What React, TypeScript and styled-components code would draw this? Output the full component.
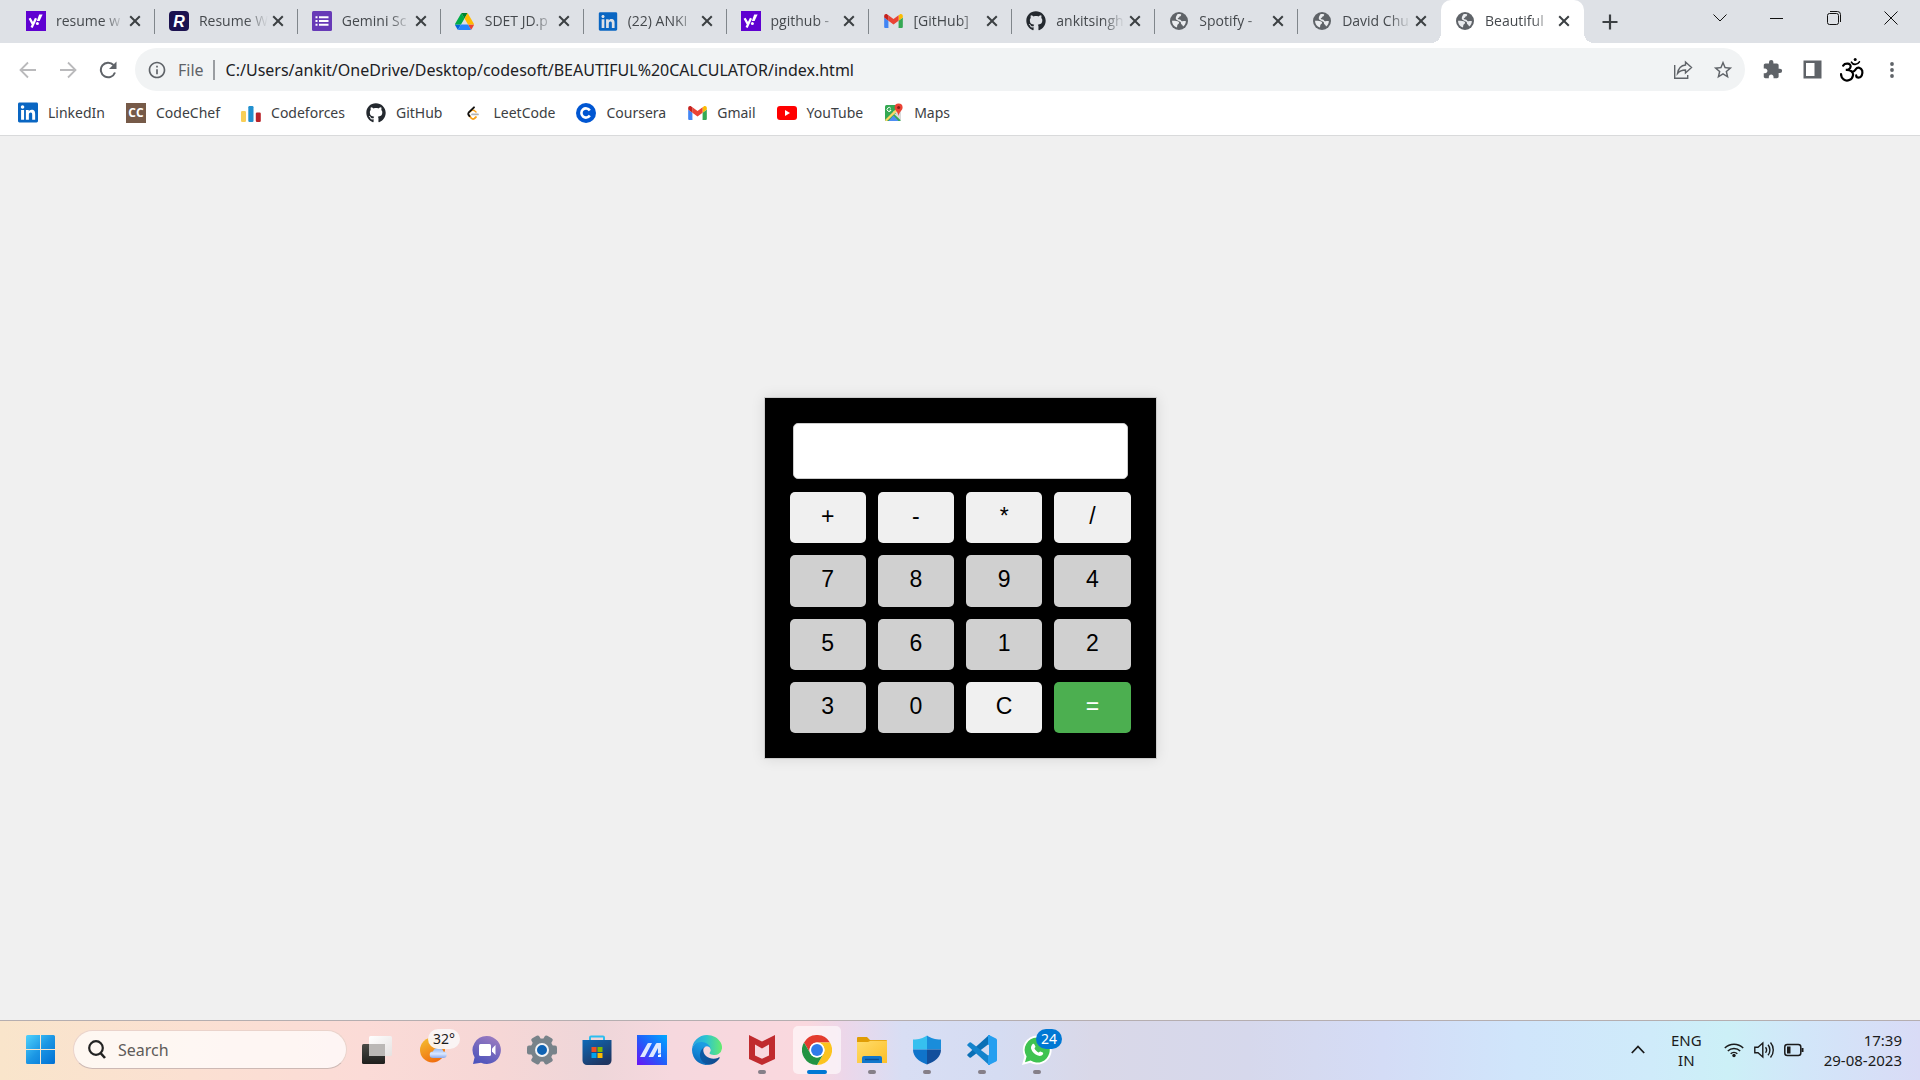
import React, { useState } from "react";
import styled, { createGlobalStyle, css } from "styled-components";
import { FaGithub, FaLinkedin } from "react-icons/fa";
import { MdExtension, MdStarBorder, MdOutlineInfo } from "react-icons/md";

const uiFont = `"Noto Sans", "Open Sans", sans-serif`;

const GlobalStyle = createGlobalStyle`
  *, *::before, *::after { box-sizing: border-box; }
  body { margin: 0; background: #f0f0f0; font-family: ${uiFont}; }
  button, input { font-family: inherit; }
`;

/* ---------- shared ---------- */

const Screen = styled.div`
  display: flex;
  flex-direction: column;
  min-height: 100vh;
`;

const PlainButton = styled.button`
  display: flex;
  align-items: center;
  justify-content: center;
  flex: none;
  padding: 0;
  border: 0;
  background: none;
  color: inherit;
`;

const IconBox = styled.span<{ $size: number }>`
  display: flex;
  align-items: center;
  justify-content: center;
  flex: none;
  width: ${(p) => p.$size}px;
  height: ${(p) => p.$size}px;

  svg { display: block; }
`;

/* ---------- tab strip ---------- */

const TabStrip = styled.header`
  display: flex;
  height: 43px;
  padding: 0 1px 0 12px;
  background: #dee1e6;
  color: #3c4043;
`;

const TabList = styled.nav`
  display: flex;
  flex: 0 1 1572px;
  min-width: 0;
`;

const Tab = styled.div<{ $active?: boolean; $divided?: boolean }>`
  position: relative;
  display: flex;
  align-items: center;
  flex: 1 1 0;
  min-width: 0;
  padding: 0 11px 1px 14px;

  ${(p) =>
    p.$divided &&
    css`
      &::after {
        content: "";
        position: absolute;
        right: 0;
        top: 9px;
        width: 1px;
        height: 25px;
        background: #80868b;
      }
    `}

  ${(p) =>
    p.$active &&
    css`
      background: #fff;
      border-radius: 10px 10px 0 0;

      &::before,
      &::after {
        content: "";
        position: absolute;
        bottom: 0;
        width: 10px;
        height: 10px;
      }
      &::before {
        left: -10px;
        background: radial-gradient(circle at 0 0, transparent 10px, #fff 10px);
      }
      &::after {
        right: -10px;
        background: radial-gradient(circle at 100% 0, transparent 10px, #fff 10px);
      }
    `}
`;

const TabTitle = styled.a`
  flex: 1;
  min-width: 0;
  margin-left: 10px;
  overflow: hidden;
  color: #45494d;
  font-family: "Open Sans", "Noto Sans", sans-serif;
  font-size: 14px;
  line-height: 20px;
  text-decoration: none;
  white-space: nowrap;
  mask-image: linear-gradient(to right, #000 calc(100% - 22px), transparent);
`;

const TabClose = styled(PlainButton)`
  width: 18px;
  height: 20px;
  margin-left: 1px;
`;

const NewTab = styled(PlainButton)`
  width: 52px;
`;

const WindowControls = styled.div`
  display: flex;
  height: 36px;
  margin-left: auto;
  color: #111;
`;

const WindowButton = styled(PlainButton)`
  width: 57px;
`;

/* ---------- toolbar ---------- */

const Toolbar = styled.div`
  display: flex;
  align-items: center;
  padding: 5px 8px 0;
  background: #fff;
  color: #5f6368;
`;

const ToolButton = styled(PlainButton)<{ $muted?: boolean }>`
  width: 40px;
  height: 40px;
  color: ${(p) => (p.$muted ? "#bababc" : "#5f6368")};
`;

const Omnibox = styled.label`
  display: flex;
  align-items: center;
  flex: 1;
  height: 43px;
  margin: 0 7px;
  padding: 0 2px 0 12px;
  border-radius: 22px;
  background: #f1f3f4;
  font-size: 16px;
`;

const Scheme = styled.span`
  margin-left: 11px;
  padding-right: 9px;
  border-right: 2px solid #9a9da1;
  line-height: 20px;
`;

const Address = styled.input`
  flex: 1;
  min-width: 0;
  padding: 0 0 0 11px;
  border: 0;
  outline: 0;
  background: none;
  color: #202124;
  font-size: 16px;
`;

/* ---------- bookmarks ---------- */

const Bookmarks = styled.nav`
  display: flex;
  align-items: center;
  gap: 21px;
  height: 45px;
  padding: 0 18px 1px;
  border-bottom: 1px solid #d9dadb;
  background: #fff;
`;

const Bookmark = styled.a`
  display: flex;
  align-items: center;
  gap: 10px;
  color: #3c4043;
  font-size: 14px;
  line-height: 20px;
  text-decoration: none;
`;

/* ---------- calculator ---------- */

const Page = styled.main`
  display: flex;
  flex: 1;
  align-items: center;
  justify-content: center;
  background: #f0f0f0;
`;

const Calculator = styled.section`
  display: flex;
  flex-direction: column;
  gap: 13px;
  width: 393px;
  padding: 25px;
  border: 1px solid #ccc;
  background: #000;
  box-shadow: 0 0 13px rgba(0, 0, 0, 0.1);
  font-family: "Liberation Sans", Arial, sans-serif;
`;

const Display = styled.input`
  height: 56px;
  margin: 0 3px;
  padding: 0 12px;
  border: 1px solid #ccc;
  border-radius: 5px;
  outline: 0;
  background: #fff;
  font-size: 30px;
  text-align: right;
`;

const Keys = styled.div`
  display: grid;
  grid-template-columns: repeat(4, 1fr);
  grid-template-rows: repeat(4, 1fr);
  gap: 12px;
  height: 241px;
`;

const keyColors = {
  operator: ["#f0f0f0", "#000"],
  digit: ["#d0d0d0", "#000"],
  equals: ["#4caf50", "#fff"],
};

const Key = styled.button<{ $kind: keyof typeof keyColors }>`
  padding: 0 0 2px;
  border: 0;
  border-radius: 5px;
  background: ${(p) => keyColors[p.$kind][0]};
  color: ${(p) => keyColors[p.$kind][1]};
  font-size: 23px;
`;

/* ---------- taskbar ---------- */

const Taskbar = styled.footer`
  display: flex;
  align-items: center;
  height: 60px;
  padding: 0 18px 2px 12px;
  border-top: 1px solid #b5aeb0;
  background: linear-gradient(
    to right,
    #f9e5cb 0%, #fbe0d2 10%, #fbdbd7 19%, #f6d7d6 26%, #eed6d9 31%, #f6d8de 35%,
    #fad8de 42%, #ecd7ea 44%, #d8def4 47%, #d5dcf2 52%, #d9d8e8 57%, #d6d8ec 65%,
    #d4dcf6 72%, #d0e5fb 79%, #cfebfa 86%, #ccf0f7 90%, #d2e6f9 94%, #d9dbf6 100%
  );
  color: #1b1b1b;
`;

const StartButton = styled(PlainButton)`
  width: 57px;
  height: 50px;
`;

const SearchBox = styled.label`
  display: flex;
  align-items: center;
  gap: 12px;
  width: 274px;
  height: 39px;
  margin: 0 4px;
  padding: 0 14px;
  border: 1px solid #ead3cb;
  border-bottom-color: #cdb9b4;
  border-radius: 20px;
  background: rgba(255, 255, 255, 0.72);
`;

const SearchInput = styled.input`
  flex: 1;
  min-width: 0;
  padding: 0;
  border: 0;
  outline: 0;
  background: none;
  font-size: 16px;

  &::placeholder { color: #5f5b59; opacity: 1; }
`;

const AppList = styled.div`
  display: flex;
  gap: 7px;
  margin-left: 2px;
`;

const AppButton = styled(PlainButton)<{ $open?: boolean; $active?: boolean }>`
  position: relative;
  width: 48px;
  height: 48px;
  border-radius: 5px;
  background: ${(p) => (p.$active ? "rgba(255, 255, 255, 0.6)" : "none")};

  ${(p) =>
    (p.$open || p.$active) &&
    css`
      &::after {
        content: "";
        position: absolute;
        bottom: 0;
        width: ${p.$active ? 20 : 8}px;
        height: 4px;
        border-radius: 2px;
        background: ${p.$active ? "#0078d4" : "#857f88"};
      }
    `}
`;

const Badge = styled.span<{ $blue?: boolean }>`
  position: absolute;
  top: 3px;
  left: ${(p) => (p.$blue ? 23 : 20)}px;
  padding: 0 5px;
  border-radius: 10px;
  background: ${(p) => (p.$blue ? "#0078d4" : "rgba(250, 246, 245, 0.95)")};
  color: ${(p) => (p.$blue ? "#fff" : "#1b1b1b")};
  font-size: 14px;
  line-height: 20px;
`;

const Tray = styled.div`
  display: flex;
  align-items: center;
  margin-left: auto;
  font-size: 15px;
  line-height: 20px;
`;

const TrayText = styled.div<{ $right?: boolean }>`
  text-align: ${(p) => (p.$right ? "right" : "center")};
`;

const TrayIcons = styled.div`
  display: flex;
  gap: 10px;
  margin: 0 20px 0 22px;
`;

const TrayChevron = styled(PlainButton)`
  width: 20px;
  height: 40px;
  margin-right: 23px;
`;

/* ---------- drawings ---------- */

const Cross = () => (
  <svg width="12" height="12" viewBox="0 0 12 12" stroke="#3c4043" strokeWidth="2">
    <path d="M1.2 1.2 10.8 10.8M10.8 1.2 1.2 10.8" />
  </svg>
);

const Yahoo = () => (
  <svg width="20" height="20" viewBox="0 0 20 20">
    <path fill="#5f01d1" d="M0 0h20v20H0z" />
    <path d="M3.6 7.2 6.6 12.6M10 7.2 5.6 16.4" stroke="#fff" strokeWidth="2.3" fill="none" />
    <path d="M13.2 3.6h3.4L13.6 10h-2.8z" fill="#fff" />
    <circle cx="11.4" cy="12.4" r="1.5" fill="#fff" />
  </svg>
);

const ResumeLogo = () => (
  <svg width="20" height="20" viewBox="0 0 20 20">
    <rect width="20" height="20" rx="4" fill="#1c1250" />
    <text x="10" y="15.5" textAnchor="middle" fill="#fff" fontFamily="Liberation Sans" fontWeight="700" fontStyle="italic" fontSize="16">R</text>
  </svg>
);

const Forms = () => (
  <svg width="20" height="20" viewBox="0 0 20 20">
    <rect width="20" height="20" rx="1.5" fill="#673ab7" />
    <path d="M7 6.2h9.5M7 10h9.5M7 13.8h9.5M3.5 6.2h2M3.5 10h2M3.5 13.8h2" stroke="#fff" strokeWidth="2" />
  </svg>
);

const Drive = () => (
  <svg width="19" height="17" viewBox="0 0 87.3 78">
    <path d="m6.6 66.85 3.85 6.65c.8 1.4 1.95 2.5 3.3 3.3l13.75-23.8h-27.5c0 1.55.4 3.1 1.2 4.5z" fill="#0066da" />
    <path d="m43.65 25-13.75-23.8c-1.35.8-2.5 1.9-3.3 3.3l-25.4 44a9.06 9.06 0 0 0 -1.2 4.5h27.5z" fill="#00ac47" />
    <path d="m73.55 76.8c1.35-.8 2.5-1.9 3.3-3.3l1.6-2.75 7.65-13.25c.8-1.4 1.2-2.95 1.2-4.5h-27.502l5.852 11.5z" fill="#ea4335" />
    <path d="m43.65 25 13.75-23.8c-1.35-.8-2.9-1.2-4.5-1.2h-18.5c-1.6 0-3.15.45-4.5 1.2z" fill="#00832d" />
    <path d="m59.8 53h-32.3l-13.75 23.8c1.35.8 2.9 1.2 4.5 1.2h50.8c1.6 0 3.15-.45 4.5-1.2z" fill="#2684fc" />
    <path d="m73.4 26.5-12.7-22c-.8-1.4-1.95-2.5-3.3-3.3l-13.75 23.8 16.15 28h27.45c0-1.55-.4-3.1-1.2-4.5z" fill="#ffba00" />
  </svg>
);

const Gmail = () => (
  <svg width="19" height="14" viewBox="52 42 88 66">
    <path fill="#4285f4" d="M58 108h14V74L52 59v43c0 3.32 2.69 6 6 6" />
    <path fill="#34a853" d="M120 108h14c3.32 0 6-2.69 6-6V59l-20 15" />
    <path fill="#fbbc04" d="M120 48v26l20-15v-8c0-7.42-8.47-11.65-14.4-7.2" />
    <path fill="#ea4335" d="M72 74V48l24 18 24-18v26L96 92" />
    <path fill="#c5221f" d="M52 51v8l20 15V48l-5.6-4.2c-5.94-4.45-14.4-.22-14.4 7.2" />
  </svg>
);

const Globe = () => (
  <svg width="18" height="18" viewBox="0 0 18 18">
    <circle cx="9" cy="9" r="9" fill="#5f6368" />
    <path d="M9.300 2.200C8.300 2.900 7.600 3.600 7.600 4.600 7.600 5.500 8.600 5.400 8.700 6.400 8.800 7.600 7.500 7.500 7.400 8.500 8.600 8.800 10.200 8.600 10.700 9.700 11.200 10.900 12.600 10.300 13.600 10.500 14.600 10.700 15.500 10.300 16 9 16 5.500 13 2.300 9.300 2.200z" fill="#e9ebee" opacity="0" />
    <path d="M2 8.800C3.500 8.600 7.200 8.800 8.600 9.700 9.700 10.500 8.800 11.800 8 12.200 7 12.700 7.400 14 6.900 15.400 3.900 14.500 2 11.900 2 8.800z" fill="#e9ebee" />
    <path d="M7.400 2.300C8.500 1.900 10 1.900 11.200 2.400 11.300 3.700 10.300 4.300 9.400 4.600 9.300 5.600 8.700 6 7.800 6.200 7.600 7.100 8.200 7.300 9.600 7.400 10.900 7.600 11 8.900 12 9.200 13.300 9.500 14.200 8.700 15.900 9.300 15.800 11.400 14.800 13.200 13.100 14.500 12.600 13.300 12.200 12.600 11.300 12.300 10.600 11.500 11.400 10.300 10.300 9.800 8.800 9.200 6.700 8.200 6 7.300 5.300 6.200 6.400 3.600 7.400 2.300z" fill="#e9ebee" />
  </svg>
);

const CodeChef = () => (
  <svg width="20" height="20" viewBox="0 0 20 20">
    <rect width="20" height="20" fill="#765a48" />
    <text x="10" y="14" textAnchor="middle" fill="#fff" fontFamily="Open Sans" fontWeight="700" fontSize="12">CC</text>
  </svg>
);

const Codeforces = () => (
  <svg width="20" height="20" viewBox="0 0 20 20">
    <rect x="0" y="8" width="5" height="11" rx="1.2" fill="#f9cf58" />
    <rect x="7.3" y="3" width="5.2" height="16" rx="1.2" fill="#2190cf" />
    <rect x="14.8" y="9.5" width="5" height="9.5" rx="1.2" fill="#b92329" />
  </svg>
);

const LeetCode = () => (
  <svg width="20" height="20" viewBox="0 0 20 20" fill="none" strokeLinecap="round">
    <path d="M6 12.500 8.300 15.200Q9.800 16.700 11.400 15.500L13 14" stroke="#f9a119" strokeWidth="1.800" />
    <path d="M6.500 9.200 8.300 7.600Q9.800 6.600 11.200 7.500L13 9" stroke="#f9a119" strokeWidth="1.500" />
    <path d="M11 4.300 5.600 9.700Q4.800 10.800 5.600 12L6.500 13" stroke="#111" strokeWidth="1.900" />
    <path d="M9 11.400h6" stroke="#b3b3b3" strokeWidth="1.700" />
  </svg>
);

const Coursera = () => (
  <svg width="20" height="20" viewBox="0 0 20 20">
    <circle cx="10" cy="10" r="10" fill="#0056d2" />
    <path d="M13.8 7.4A4.6 4.6 0 1 0 13.8 12.6" fill="none" stroke="#fff" strokeWidth="2.6" />
  </svg>
);

const YouTube = () => (
  <svg width="20" height="14" viewBox="0 0 20 14">
    <rect width="20" height="14" rx="3" fill="#f00" />
    <path d="M8 4v6l5-3z" fill="#fff" />
  </svg>
);

const Maps = () => (
  <svg width="20" height="20" viewBox="0 0 20 20">
    <rect x="1" y="2" width="16" height="16" rx="1.5" fill="#34a853" />
    <path d="M9 8 17 15.500V8z" fill="#dadada" />
    <path d="M1 17 15.500 2.500l1.500 2L3 18H2z" fill="#fdd663" />
    <path d="M4.500 18 9.500 12.500 14.500 18z" fill="#4e8df5" />
    <path d="M9.500 10.500 17 17.500V12z" fill="#dadada" />
    <path d="M6.800 5.400A2 2 0 1 0 7 7.200H5.500" stroke="#fff" strokeWidth="1" fill="none" />
    <path d="M14.600 0.500a4 4 0 0 1 4 4c0 3-3.300 4-4 8.500-.7-4.500-4-5.500-4-8.500a4 4 0 0 1 4-4z" fill="#ea4335" />
    <circle cx="14.600" cy="4.600" r="1.500" fill="#8c1d18" />
  </svg>
);

const Om = () => (
  <svg width="24" height="25" viewBox="1 0 24 25" fill="none" stroke="#000" strokeLinecap="round">
    <path d="M4.200 8.600C6 5.800 12 6 11.600 9.600 11.300 12 9 12.900 6.800 12.900 11 12.600 14.600 14.400 14 18.400 13.300 23 8 25 4.600 22.400 3 21.200 2.100 19.400 2 17" strokeWidth="2.200" />
    <path d="M12.800 14.600C14.600 15.400 15.600 13.800 16.800 12.200 18.600 9.800 22.200 10.400 23.200 13.600 24 17.200 22.400 20.600 19.600 20.600 18 20.600 17.200 19.600 17.200 18.400" strokeWidth="2.200" />
    <path d="M12.400 5.200C13.800 8.200 18.400 8.200 20.400 4.800" strokeWidth="1.600" />
    <circle cx="16.200" cy="2.600" r="1.500" fill="#000" stroke="none" />
  </svg>
);

const StartLogo = () => (
  <svg width="29" height="29" viewBox="0 0 29 29">
    <defs>
      <linearGradient id="start" x1="0" y1="0" x2="1" y2="1">
        <stop offset="0" stopColor="#4fd2fc" /><stop offset="0.500" stopColor="#1b96e4" /><stop offset="1" stopColor="#0070d4" />
      </linearGradient>
    </defs>
    <path d="M1.500 0H14v14H0V1.500A1.500 1.500 0 0 1 1.500 0zM15 0h12.500A1.500 1.500 0 0 1 29 1.500V14H15zM0 15h14v14H1.500A1.500 1.500 0 0 1 0 27.500zM15 15h14v12.500a1.500 1.500 0 0 1-1.500 1.500H15z" fill="url(#start)" />
  </svg>
);

const TaskView = () => (
  <svg width="30" height="30" viewBox="0 0 30 30">
    <defs>
      <linearGradient id="tvd" x1="0" y1="0" x2="0" y2="1"><stop offset="0" stopColor="#4a4a46" /><stop offset="1" stopColor="#1f1f1d" /></linearGradient>
      <linearGradient id="tvl" x1="0" y1="0" x2="1" y2="1"><stop offset="0" stopColor="#fff" /><stop offset="1" stopColor="#e6e2e1" /></linearGradient>
    </defs>
    <rect x="0" y="9" width="23" height="20" rx="1.500" fill="url(#tvd)" />
    <rect x="7" y="1" width="23" height="20" rx="1.500" fill="url(#tvl)" />
    <rect x="7" y="9" width="16" height="12" fill="#bbb8b6" />
  </svg>
);

const Weather = () => (
  <svg width="30" height="30" viewBox="0 0 30 30">
    <defs>
      <linearGradient id="sun" x1="0.200" y1="0" x2="0.700" y2="1"><stop offset="0" stopColor="#f4bc2f" /><stop offset="1" stopColor="#f0690c" /></linearGradient>
      <linearGradient id="cloud" x1="0" y1="0" x2="0" y2="1"><stop offset="0" stopColor="#86b0f2" /><stop offset="0.600" stopColor="#dbe8ff" /><stop offset="1" stopColor="#8aa9ea" /></linearGradient>
    </defs>
    <circle cx="15.500" cy="15" r="12.500" fill="url(#sun)" />
    <path d="M16 23a3.300 3.300 0 0 1 0-6.600 5.500 5.500 0 0 1 10.400 0 3.300 3.300 0 0 1 0 6.600z" fill="url(#cloud)" />
  </svg>
);

const Chat = () => (
  <svg width="30" height="30" viewBox="0 0 30 30">
    <defs><linearGradient id="chat" x1="0.700" y1="0" x2="0.200" y2="1"><stop offset="0" stopColor="#9a7bc0" /><stop offset="1" stopColor="#4b53bc" /></linearGradient></defs>
    <path d="M15 1a14 14 0 1 1-6 26.700L1 29l1.600-6.800A14 14 0 0 1 15 1z" fill="url(#chat)" />
    <rect x="7" y="9" width="12" height="12" rx="1.500" fill="#fff" />
    <path d="M20 13.500 23.500 10v10L20 16.500z" fill="#fff" />
  </svg>
);

const Gear = () => (
  <svg width="30" height="30" viewBox="0 0 30 30">
    <g fill="#78838a">
      {[0, 60, 120].map((a) => (
        <rect key={a} x="0" y="10.500" width="30" height="9" rx="2" transform={`rotate(${a} 15 15)`} />
      ))}
      <circle cx="15" cy="15" r="11.500" />
    </g>
    <circle cx="15" cy="15" r="6" fill="#0f63b3" stroke="#f3f4f6" strokeWidth="2" />
  </svg>
);

const Store = () => (
  <svg width="30" height="30" viewBox="0 0 30 30">
    <defs><linearGradient id="store" x1="0" y1="0" x2="0.600" y2="1"><stop offset="0" stopColor="#0e6ab8" /><stop offset="1" stopColor="#1f3662" /></linearGradient></defs>
    <path d="M8 6V2.500Q8 1.500 9 1.500H21Q22 1.500 22 2.500V6" fill="none" stroke="#2cbef0" strokeWidth="2" />
    <path d="M.5 5h29v20.500a4.500 4.500 0 0 1-4.500 4.500H5A4.500 4.500 0 0 1 .5 25.500z" fill="url(#store)" />
    <path d="M9.500 12h5v5h-5z" fill="#f25022" /><path d="M15.500 12h5v5h-5z" fill="#7fba00" />
    <path d="M9.500 18h5v5h-5z" fill="#00a4ef" /><path d="M15.500 18h5v5h-5z" fill="#ffb900" />
  </svg>
);

const Armoury = () => (
  <svg width="30" height="30" viewBox="0 0 30 30">
    <defs><linearGradient id="arm" x1="0" y1="1" x2="1" y2="0"><stop offset="0" stopColor="#6a12f5" /><stop offset="0.500" stopColor="#2060fa" /><stop offset="1" stopColor="#00aaff" /></linearGradient></defs>
    <path d="M0 0h30v30H0z" fill="url(#arm)" />
    <path d="M3 22 10.500 8.500Q11 8 11.500 8H15L8 21.500Q7.700 22 7 22zM11.500 22 19 8.500Q19.300 8 20 8H24V18.500H21V13L16.500 21.500Q16.200 22 15.500 22z" fill="#dfe9ff" />
    <path d="M21 20l3-1v3h-3z" fill="#fff" />
  </svg>
);

const Edge = () => (
  <svg width="30" height="30" viewBox="0 0 256 256">
    <defs>
      <linearGradient id="edgeA" x1="0.200" y1="0.500" x2="1" y2="0.600"><stop offset="0" stopColor="#0c59a4" /><stop offset="1" stopColor="#114a8b" /></linearGradient>
      <linearGradient id="edgeB" x1="0.600" y1="0.200" x2="0.300" y2="1"><stop offset="0" stopColor="#1b9de2" /><stop offset="0.500" stopColor="#1383d4" /><stop offset="1" stopColor="#0a62b0" /></linearGradient>
      <linearGradient id="edgeC" x1="0" y1="0.500" x2="1" y2="0.500"><stop offset="0" stopColor="#2d9fe0" /><stop offset="0.450" stopColor="#2bc3d2" /><stop offset="1" stopColor="#66eb6e" /></linearGradient>
    </defs>
    <path d="M231 190.500c-3.400 1.800-6.900 3.400-10.500 4.700a101.900 101.900 0 0 1-35.900 6.500c-47.300 0-88.500-32.500-88.500-74.300a31.500 31.500 0 0 1 16.400-27.300c-42.800 1.800-53.800 46.400-53.800 72.500 0 74 68.100 81.400 82.800 81.400 7.900 0 19.800-2.300 27-4.600l1.300-.4a128.300 128.300 0 0 0 66.600-52.800 4 4 0 0 0-5.400-5.700z" fill="url(#edgeA)" />
    <path d="M105.700 241.500A79.200 79.200 0 0 1 83 220.200a80.700 80.700 0 0 1 29.500-120c3.200-1.500 8.500-4.100 15.600-4a32.400 32.400 0 0 1 25.700 13 31.900 31.900 0 0 1 6.300 18.700c0-.2 24.500-79.600-80-79.600-43.900 0-80 41.700-80 78.200a130.200 130.200 0 0 0 12.100 56 128 128 0 0 0 156.400 67.100 75.600 75.600 0 0 1-62.900-8z" fill="url(#edgeB)" />
    <path d="M152.300 148.900c-.9 1-3.400 2.500-3.400 5.600 0 2.600 1.700 5.200 4.800 7.300 14.400 10.100 41.700 8.700 41.700 8.700 10.700 0 21.300-2.900 30.500-8.400a61.800 61.800 0 0 0 30.400-53.200c.3-22.400-8-37.300-11.300-43.900C223.600 23.800 177.700 0 127.800 0A128 128 0 0 0 0 126.200c.5-36.500 36.800-66 80-66 3.500 0 23.500.3 42 10.100 16.300 8.600 24.900 18.900 30.800 29.200 6.200 10.700 7.300 24.100 7.300 29.500 0 5.300-2.700 13.300-7.800 19.900z" fill="url(#edgeC)" />
  </svg>
);

const McAfee = () => (
  <svg width="28" height="30" viewBox="0 0 28 30">
    <path d="M1 0 14 6.500 27 0V24L14 30 1 24z" fill="#c02b2e" />
    <path d="M7 9.500 14 13.500 21 9.500V20.500L14 23.800 7 20.500z" fill="#f8d8de" />
  </svg>
);

const Chrome = () => (
  <svg width="30" height="30" viewBox="0 0 48 48">
    <circle cx="24" cy="24" r="24" fill="#fff" />
    <path d="M3.200 12A24 24 0 0 1 44.800 12H24A12 12 0 0 0 13.600 30z" fill="#e33b2e" />
    <path d="M44.800 12A24 24 0 0 1 24 48L34.400 30A12 12 0 0 0 24 12z" fill="#fcc31e" />
    <path d="M24 48A24 24 0 0 1 3.200 12L13.600 30A12 12 0 0 0 34.400 30z" fill="#229342" />
    <circle cx="24" cy="24" r="12" fill="#fff" />
    <circle cx="24" cy="24" r="9.500" fill="#2f7bea" />
  </svg>
);

const Folder = () => (
  <svg width="30" height="28" viewBox="0 0 30 28">
    <defs><linearGradient id="fold" x1="0" y1="0" x2="1" y2="1"><stop offset="0" stopColor="#ffdc6b" /><stop offset="1" stopColor="#fcbf28" /></linearGradient></defs>
    <path d="M0 2Q0 1 1 1H10L13 4H29Q30 4 30 5V12H0z" fill="#e09d05" />
    <path d="M0 6H11L13.500 4.800H30V27H0z" fill="url(#fold)" />
    <path d="M5 27V22Q5 20 7 20H23Q25 20 25 22V27z" fill="#1276cb" />
    <path d="M8 23.500h14" stroke="#0a4f94" strokeWidth="1.400" />
  </svg>
);

const Shield = () => (
  <svg width="28" height="30" viewBox="0 0 28 30">
    <path d="M14 .5C10 3.500 6 4.300 0 4.500V14.500H14z" fill="#36c0ef" />
    <path d="M14 .5C18 3.500 22 4.300 28 4.500V14.500H14z" fill="#1a8ddb" />
    <path d="M0 14.500C0 22 6 26.500 14 29.500V14.500z" fill="#0f74cb" />
    <path d="M28 14.500C28 22 22 26.500 14 29.500V14.500z" fill="#124f9c" />
  </svg>
);

const Code = () => (
  <svg width="30" height="30" viewBox="0 0 30 30">
    <path d="M22 0 29 3.500Q30 4 30 5V25Q30 26 29 26.500L22 30z" fill="#259ff0" />
    <path d="M22 0 .6 19.200Q-.2 20 .6 20.800L2.500 22.500Q3.200 23 4 22.500L23 8z" fill="#0a6fb5" />
    <path d="M22 30 .6 10.800Q-.2 10 .6 9.200L2.500 7.500Q3.200 7 4 7.500L23 22z" fill="#1383cc" />
    <path d="M21 0h2v9l-2 1zM21 20l2 1v9h-2z" fill="#259ff0" />
  </svg>
);

const WhatsApp = () => (
  <svg width="32" height="32" viewBox="0 0 32 32">
    <path d="M16 1.500a14.500 14.500 0 1 1-6.700 27.300L1 31l2.400-8.500A14.500 14.500 0 0 1 16 1.500z" fill="#fff" />
    <path d="M16 3.500a12.500 12.500 0 1 1-6.400 23.100L4 28.200l1.600-5.600A12.500 12.500 0 0 1 16 3.500z" fill="#3fc351" />
    <path d="M11.500 10.200c.7-.7 1.500-.6 1.900.2l1 2.200c.3.700-.9 1.600-.9 2 .9 1.800 2.200 3 4 3.900.5.100 1.300-1.300 1.900-1l2.300 1.100c.6.300.6 1 .2 1.700-1 1.700-3 2-4.900 1.300-3.400-1.200-5.700-3.500-6.800-6.600-.6-1.800.2-3.700 1.300-4.800z" fill="#fff" />
  </svg>
);

const LinkedIn = ({ size = 23 }: { size?: number }) => <FaLinkedin size={size} color="#0a66c2" />;
const GitHub = () => <FaGithub size={20} color="#24292f" />;

/* ---------- data ---------- */

const tabs = [
  { title: "resume w", icon: <Yahoo /> },
  { title: "Resume W", icon: <ResumeLogo /> },
  { title: "Gemini Sc", icon: <Forms /> },
  { title: "SDET JD.p", icon: <Drive /> },
  { title: "(22) ANKI", icon: <LinkedIn size={21} /> },
  { title: "pgithub -", icon: <Yahoo /> },
  { title: "[GitHub]", icon: <Gmail /> },
  { title: "ankitsingh", icon: <GitHub /> },
  { title: "Spotify -", icon: <Globe /> },
  { title: "David Chu", icon: <Globe /> },
  { title: "Beautiful", icon: <Globe /> },
];

const bookmarks = [
  { name: "LinkedIn", icon: <LinkedIn /> },
  { name: "CodeChef", icon: <CodeChef /> },
  { name: "Codeforces", icon: <Codeforces /> },
  { name: "GitHub", icon: <GitHub /> },
  { name: "LeetCode", icon: <LeetCode /> },
  { name: "Coursera", icon: <Coursera /> },
  { name: "Gmail", icon: <Gmail /> },
  { name: "YouTube", icon: <YouTube /> },
  { name: "Maps", icon: <Maps /> },
];

const keys = ["+", "-", "*", "/", "7", "8", "9", "4", "5", "6", "1", "2", "3", "0", "C", "="];

const kindOf = (k: string): keyof typeof keyColors =>
  k === "=" ? "equals" : /\d/.test(k) ? "digit" : "operator";

const apps = [
  { name: "Task view", icon: <TaskView /> },
  { name: "Weather", icon: <Weather />, badge: "32°" },
  { name: "Chat", icon: <Chat /> },
  { name: "Settings", icon: <Gear /> },
  { name: "Store", icon: <Store /> },
  { name: "MyASUS", icon: <Armoury /> },
  { name: "Edge", icon: <Edge /> },
  { name: "McAfee", icon: <McAfee />, open: true },
  { name: "Chrome", icon: <Chrome />, active: true },
  { name: "File Explorer", icon: <Folder />, open: true },
  { name: "Security", icon: <Shield />, open: true },
  { name: "Code", icon: <Code />, open: true },
  { name: "WhatsApp", icon: <WhatsApp />, open: true, badge: "24", blue: true },
];

/* ---------- calculator logic ---------- */

function evaluate(expr: string): string {
  const parts = expr.match(/\d+(\.\d+)?|[+\-*/]/g);
  if (!parts) return "";
  const terms: number[] = [];
  let op = "+";
  for (const p of parts) {
    if (/^[+\-*/]$/.test(p)) {
      op = p;
      continue;
    }
    const n = Number(p);
    if (op === "*") terms.push((terms.pop() ?? 0) * n);
    else if (op === "/") terms.push((terms.pop() ?? 0) / n);
    else terms.push(op === "-" ? -n : n);
  }
  return String(terms.reduce((a, b) => a + b, 0));
}

export default function App() {
  const [value, setValue] = useState("");
  const press = (k: string) =>
    setValue((v) => (k === "C" ? "" : k === "=" ? evaluate(v) : v + k));

  return (
    <Screen>
      <GlobalStyle />
      <TabStrip>
        <TabList aria-label="Tabs">
          {tabs.map((t, i) => (
            <Tab key={t.title} $active={i === tabs.length - 1} $divided={i < tabs.length - 2}>
              <IconBox $size={20}>{t.icon}</IconBox>
              <TabTitle href="#">{t.title}</TabTitle>
              <TabClose aria-label={`Close ${t.title}`}><Cross /></TabClose>
            </Tab>
          ))}
        </TabList>
        <NewTab aria-label="New tab">
          <svg width="16" height="16" viewBox="0 0 16 16" stroke="#3c4043" strokeWidth="2.200"><path d="M8 .5v15M.5 8h15" /></svg>
        </NewTab>
        <WindowControls>
          <WindowButton aria-label="Search tabs">
            <svg width="14" height="8" viewBox="0 0 14 8" fill="none" stroke="currentColor"><path d="M.5 .5 7 7 13.500 .5" /></svg>
          </WindowButton>
          <WindowButton aria-label="Minimize">
            <svg width="13" height="13" viewBox="0 0 13 13" stroke="currentColor"><path d="M0 6.500h13" /></svg>
          </WindowButton>
          <WindowButton aria-label="Restore">
            <svg width="14" height="14" viewBox="0 0 14 14" fill="none" stroke="currentColor">
              <rect x=".5" y="2.500" width="11" height="11" rx="2" />
              <path d="M3 .5h7.500a3 3 0 0 1 3 3V11" />
            </svg>
          </WindowButton>
          <WindowButton aria-label="Close">
            <svg width="14" height="14" viewBox="0 0 14 14" stroke="currentColor"><path d="M.5 .5l13 13M13.500 .5l-13 13" /></svg>
          </WindowButton>
        </WindowControls>
      </TabStrip>

      <Toolbar>
        <ToolButton $muted aria-label="Back">
          <svg width="18" height="18" viewBox="0 0 18 18" fill="none" stroke="currentColor" strokeWidth="1.800"><path d="M17 9H2M9 1.500 1.500 9 9 16.500" /></svg>
        </ToolButton>
        <ToolButton $muted aria-label="Forward">
          <svg width="18" height="18" viewBox="0 0 18 18" fill="none" stroke="currentColor" strokeWidth="1.800"><path d="M1 9h15M9 1.500 16.500 9 9 16.500" /></svg>
        </ToolButton>
        <ToolButton aria-label="Reload">
          <svg width="18" height="18" viewBox="0 0 18 18" fill="none" stroke="currentColor" strokeWidth="2">
            <path d="M16 11.500A7.300 7.300 0 1 1 14.500 4" />
            <path d="M17.500 .5v7.500h-7.500z" fill="currentColor" stroke="none" />
          </svg>
        </ToolButton>
        <Omnibox>
          <MdOutlineInfo size={20} />
          <Scheme>File</Scheme>
          <Address
            aria-label="Address"
            defaultValue="C:/Users/ankit/OneDrive/Desktop/codesoft/BEAUTIFUL%20CALCULATOR/index.html"
          />
          <ToolButton as="span">
            <svg width="20" height="20" viewBox="0 0 20 20" fill="none" stroke="currentColor" strokeWidth="1.400">
              <path d="M1.700 5v13.300h13V15" />
              <path d="M12.500 2 18.500 7.500 12.500 13V10C9 10 6.500 11 4.500 13.500 5.200 9 8 5.500 12.500 5z" />
            </svg>
          </ToolButton>
          <ToolButton as="span"><MdStarBorder size={22} /></ToolButton>
        </Omnibox>
        <ToolButton aria-label="Extensions"><MdExtension size={21} /></ToolButton>
        <ToolButton aria-label="Side panel">
          <svg width="19" height="19" viewBox="0 0 19 19"><path fillRule="evenodd" fill="currentColor" d="M.5 .5h18v18H.5zM3 3v13h8.500V3z" /></svg>
        </ToolButton>
        <ToolButton aria-label="Profile"><Om /></ToolButton>
        <ToolButton aria-label="Menu">
          <svg width="4" height="18" viewBox="0 0 4 18" fill="currentColor"><circle cx="2" cy="3" r="1.900" /><circle cx="2" cy="9" r="1.900" /><circle cx="2" cy="15" r="1.900" /></svg>
        </ToolButton>
      </Toolbar>

      <Bookmarks aria-label="Bookmarks">
        {bookmarks.map((b) => (
          <Bookmark key={b.name} href="#">
            <IconBox $size={20}>{b.icon}</IconBox>
            {b.name}
          </Bookmark>
        ))}
      </Bookmarks>

      <Page>
        <Calculator>
          <Display aria-label="Result" readOnly value={value} />
          <Keys>
            {keys.map((k) => (
              <Key key={k} $kind={kindOf(k)} onClick={() => press(k)}>{k}</Key>
            ))}
          </Keys>
        </Calculator>
      </Page>

      <Taskbar>
        <StartButton aria-label="Start"><StartLogo /></StartButton>
        <SearchBox>
          <svg width="18" height="19" viewBox="0 0 18 19" fill="none" stroke="#222" strokeWidth="2.200"><circle cx="8" cy="8" r="6.800" /><path d="M12.500 13 17 18" strokeWidth="2.600" /></svg>
          <SearchInput aria-label="Search" placeholder="Search" />
        </SearchBox>
        <AppList>
          {apps.map((a) => (
            <AppButton key={a.name} aria-label={a.name} $open={a.open} $active={a.active}>
              {a.icon}
              {a.badge && <Badge $blue={a.blue}>{a.badge}</Badge>}
            </AppButton>
          ))}
        </AppList>
        <Tray>
          <TrayChevron aria-label="Show hidden icons">
            <svg width="14" height="9" viewBox="0 0 14 9" fill="none" stroke="currentColor" strokeWidth="1.800"><path d="M.8 8 7 1.500 13.200 8" /></svg>
          </TrayChevron>
          <TrayText>ENG<br />IN</TrayText>
          <TrayIcons>
            <svg width="20" height="20" viewBox="0 0 20 20" fill="none" stroke="currentColor" strokeWidth="1.500">
              <path d="M.8 8a13 13 0 0 1 18.400 0M3.800 11a8.800 8.800 0 0 1 12.400 0M6.700 13.800a4.700 4.700 0 0 1 6.600 0" />
              <circle cx="10" cy="15.500" r="1.700" fill="currentColor" stroke="none" />
            </svg>
            <svg width="20" height="20" viewBox="0 0 20 20" fill="none" stroke="currentColor" strokeWidth="1.400">
              <path d="M.8 7.200H4L8.800 3V17L4 12.800H.8z" />
              <path d="M11.500 7.200a4.500 4.500 0 0 1 0 5.600M14 4.800a8 8 0 0 1 0 10.400M16.500 2.500a11.500 11.500 0 0 1 0 15" />
            </svg>
            <svg width="20" height="20" viewBox="0 0 20 20" fill="none" stroke="currentColor" strokeWidth="1.500">
              <rect x=".8" y="4.500" width="16" height="11" rx="2.500" />
              <path d="M3 6.500h3.500v7H3z" fill="currentColor" stroke="none" />
              <path d="M17.500 8h2v4h-2z" fill="currentColor" stroke="none" />
            </svg>
          </TrayIcons>
          <TrayText $right>17:39<br />29-08-2023</TrayText>
        </Tray>
      </Taskbar>
    </Screen>
  );
}
